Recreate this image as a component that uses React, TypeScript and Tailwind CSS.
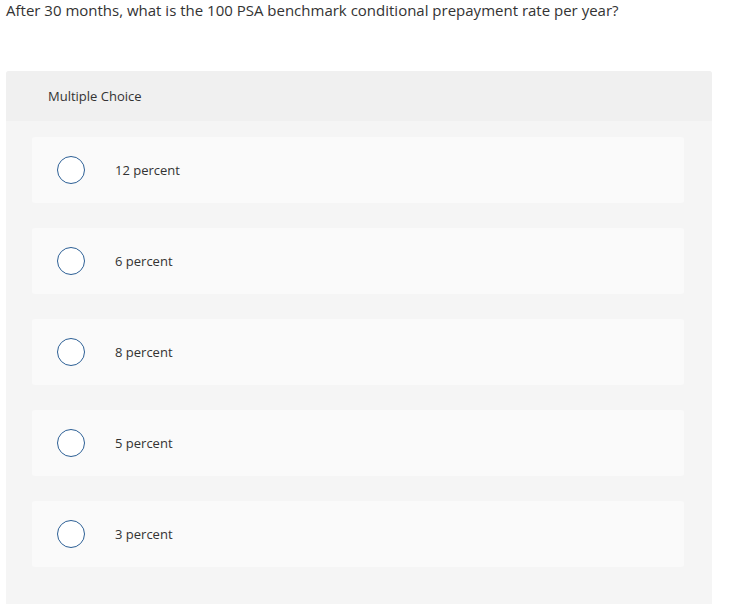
const options = ["12 percent", "6 percent", "8 percent", "5 percent", "3 percent"];

export default function App() {
  return (
    <div className="min-h-screen bg-white text-[#333] [font-family:'Open_Sans',Lato,sans-serif]">
      <p className="px-[6px] pt-[1px] text-[15px] leading-[18px]">
        After 30 months, what is the 100 PSA benchmark conditional prepayment rate per year?
      </p>

      <div className="ml-[6px] mt-[52px] w-[706px] rounded-t-[3px] bg-[#f5f5f5] pb-[40px]">
        <div className="flex h-[50px] items-center rounded-t-[3px] bg-[#f0f0f0] px-[42px] pt-[1px] text-[13px]">
          Multiple Choice
        </div>
        <div className="flex flex-col gap-[25px] pl-[26px] pr-[28px] pt-[16px]">
          {options.map((opt) => (
            <div key={opt} className="flex h-[66px] items-center rounded-[3px] bg-[#fafafa] pl-[25px]">
              <span className="h-[28px] w-[28px] shrink-0 rounded-full border border-[#2c5f95] bg-white" />
              <span className="ml-[30px] pt-[1px] text-[13px]">{opt}</span>
            </div>
          ))}
        </div>
      </div>
    </div>
  );
}
